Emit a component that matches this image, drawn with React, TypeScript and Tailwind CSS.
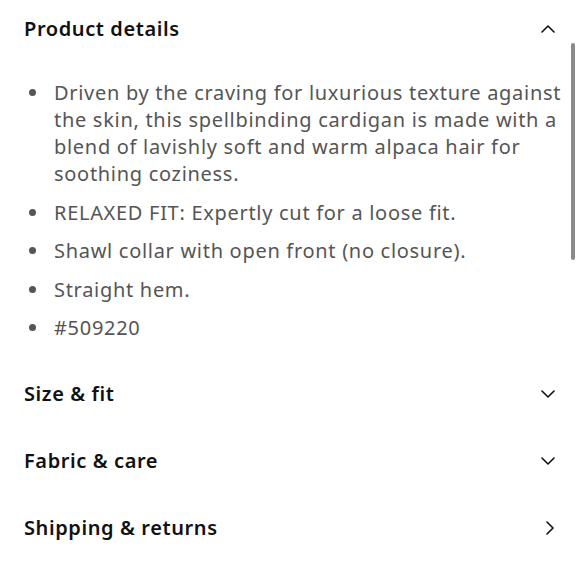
import React from "react";

const Chevron = ({ dir }: { dir: "up" | "down" | "right" }) => {
  const d =
    dir === "up"
      ? "M1 8 L7 2 L13 8"
      : dir === "down"
      ? "M1 2 L7 8 L13 2"
      : "M2 1 L8 7 L2 13";
  const w = dir === "right" ? 10 : 14;
  const h = dir === "right" ? 14 : 10;
  return (
    <svg width={w} height={h} viewBox={`0 0 ${w} ${h}`} fill="none">
      <path d={d} stroke="#111" strokeWidth="1.6" strokeLinecap="round" strokeLinejoin="round" />
    </svg>
  );
};

const items = [
  "Driven by the craving for luxurious texture against the skin, this spellbinding cardigan is made with a blend of lavishly soft and warm alpaca hair for soothing coziness.",
  "RELAXED FIT: Expertly cut for a loose fit.",
  "Shawl collar with open front (no closure).",
  "Straight hem.",
  "#509220",
];

export default function App() {
  return (
    <div className="relative w-[580px] h-[580px] bg-white overflow-hidden" style={{ fontFamily: '"Noto Sans", sans-serif' }}>
      <div className="absolute right-[5px] top-[43px] w-[4px] h-[217px] rounded-full bg-[#8a8a8a]" />
      <div className="pl-6 pr-[25px] pt-[15px]">
        <div className="flex items-center justify-between h-[28px]">
          <h2 className="text-[20px] font-semibold tracking-[0.6px] text-[#111]">Product details</h2>
          <Chevron dir="up" />
        </div>
        <ul className="mt-[36px] flex flex-col gap-[11.5px] mr-[-14px]">
          {items.map((t) => (
            <li key={t} className="flex text-[20px] leading-[27px] tracking-[0.7px] text-[#555]">
              <span className="w-[30px] shrink-0 flex justify-start pl-[5px] pt-[10px]">
                <span className="w-[7px] h-[7px] rounded-full bg-[#555]" />
              </span>
              <span>{t}</span>
            </li>
          ))}
        </ul>
        <div className="mt-[19px]">
          {[
            ["Size & fit", "down"],
            ["Fabric & care", "down"],
            ["Shipping & returns", "right"],
          ].map(([t, d]) => (
            <div key={t} className="flex items-center justify-between h-[67px]">
              <span className="text-[20px] font-semibold tracking-[0.6px] text-[#111]">{t}</span>
              <Chevron dir={d as "down" | "right"} />
            </div>
          ))}
        </div>
      </div>
    </div>
  );
}
